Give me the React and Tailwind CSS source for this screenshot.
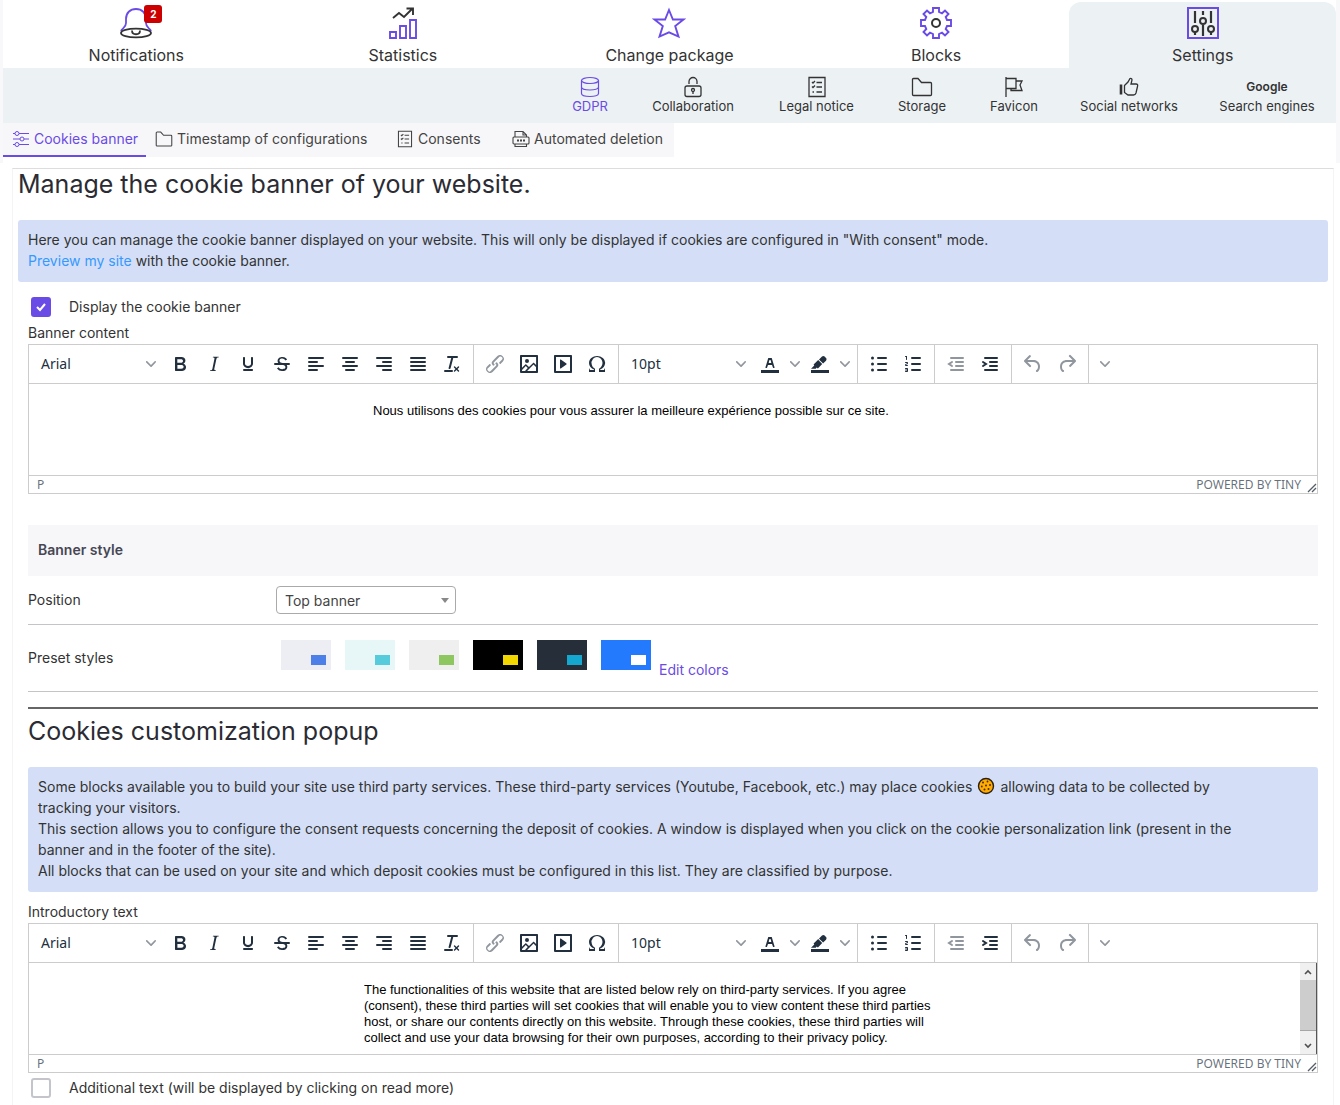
import { clsx } from 'clsx';

const mainTabs = [
  { label: 'Notifications', icon: BellIcon, badge: 2 },
  { label: 'Statistics', icon: StatsIcon },
  { label: 'Change package', icon: StarIcon },
  { label: 'Blocks', icon: GearIcon },
  { label: 'Settings', icon: SlidersIcon, active: true },
];

const subTabs = [
  { label: 'GDPR', icon: DatabaseIcon, active: true, width: 'w-[78px]' },
  { label: 'Collaboration', icon: LockIcon, width: 'w-[128px]' },
  { label: 'Legal notice', icon: ChecklistIcon, width: 'w-[119px]' },
  { label: 'Storage', icon: FolderIcon, width: 'w-[92px]' },
  { label: 'Favicon', icon: FlagIcon, width: 'w-[92px]' },
  { label: 'Social networks', icon: ThumbIcon, width: 'w-[138px]' },
  { label: 'Search engines', width: 'w-[138px]' },
];

const presets = [
  { name: 'Light blue', bg: 'bg-[#ededf4]', chip: 'bg-[#4c80e8]' },
  { name: 'Light cyan', bg: 'bg-[#e7f6f6]', chip: 'bg-[#55cbdc]' },
  { name: 'Light green', bg: 'bg-[#efefef]', chip: 'bg-[#8ec760]' },
  { name: 'Black', bg: 'bg-black', chip: 'bg-[#f1d600]' },
  { name: 'Dark', bg: 'bg-[#252e39]', chip: 'bg-[#14a7d0]' },
  { name: 'Blue', bg: 'bg-[#237afc]', chip: 'bg-white' },
];

function BellIcon() {
  return (
    <svg width="34" height="32" viewBox="0 0 34 32" fill="none" strokeWidth="1.8">
      <path d="M2 24c1-3 5-3 5-8v-4C7 6 11 2 17 2s10 4 10 10v4c0 5 4 5 5 8" stroke="#6a4be5" />
      <ellipse cx="17" cy="26" rx="15" ry="4.4" stroke="#333" />
      <path d="M13 23.500c0 5 8 5 8 0" stroke="#333" />
    </svg>
  );
}

function StatsIcon() {
  return (
    <svg width="32" height="32" viewBox="0 0 32 32" fill="none" strokeWidth="1.9">
      <path d="M6 11l6-5 5 4 8-8M19.500 1.500H26V8" stroke="#333" />
      <path d="M3 25h6v6H3zM13 19h6v12h-6zM23 13h6v18h-6z" stroke="#6a4be5" />
    </svg>
  );
}

function StarIcon() {
  return (
    <svg width="34" height="32" viewBox="0 0 34 32" fill="none" stroke="#6a4be5" strokeWidth="1.9">
      <path d="M17 3l3.900 9.500h10.600l-8.300 6.500 3.300 10.600L17 25.400l-9.500 4.200L10.800 19 2.500 12.500h10.600z" />
    </svg>
  );
}

function GearIcon() {
  return (
    <svg width="34" height="34" viewBox="0 0 34 34" fill="none" strokeWidth="1.900">
      <path
        d="M14 2h6v4l3 1.300 3-2.800 3.500 3.500-2.800 3L28 14h4v6h-4l-1.300 3 2.800 3-3.500 3.500-3-2.800L20 28v4h-6v-4l-3-1.300-3 2.800L4.500 26l2.800-3L6 20H2v-6h4l1.300-3-2.800-3L8 4.500l3 2.800L14 6z"
        stroke="#6a4be5"
      />
      <circle cx="17" cy="17" r="4" stroke="#333" strokeWidth="2" />
    </svg>
  );
}

function SlidersIcon() {
  return (
    <svg width="34" height="34" viewBox="0 0 34 34" fill="none" strokeWidth="2">
      <path d="M2 2h30v30H2z" stroke="#6a4be5" />
      <g stroke="#333">
        <path d="M9 5v12M9 26v3M17 5v4M17 19v11M25 5v12M25 26v3" strokeWidth="2.200" />
        <circle cx="9" cy="23" r="3" />
        <circle cx="17" cy="15" r="3" />
        <circle cx="25" cy="23" r="3" />
      </g>
    </svg>
  );
}

function DatabaseIcon() {
  return (
    <svg width="22" height="22" viewBox="0 0 22 22" fill="none" stroke="currentColor" strokeWidth="1.200">
      <ellipse cx="11" cy="4.500" rx="8.500" ry="3" />
      <path d="M2.500 4.500v13c0 4 17 4 17 0v-13M2.500 11c0 4 17 4 17 0" />
    </svg>
  );
}

function LockIcon() {
  return (
    <svg width="22" height="22" viewBox="0 0 22 22" fill="none" stroke="currentColor" strokeWidth="1.300">
      <rect x="3" y="10" width="16" height="10.500" rx="2" />
      <path d="M7 8V5.500a4 4 0 0 1 8 0V8M11 15v3" />
      <circle cx="11" cy="14" r="1.500" />
    </svg>
  );
}

function ChecklistIcon({ size = 22 }) {
  return (
    <svg width={size} height={size} viewBox="0 0 22 22" fill="none" stroke="currentColor" strokeWidth="1.300">
      <path d="M3 1.500h16v19H3zM10.500 6.500H16M10.500 11H16M10.500 16H16" />
      <path d="M6 6l1 1 2-2M6 10.500l1 1 2-2M6.500 16h1.500" />
    </svg>
  );
}

function FolderIcon({ size = 22 }) {
  return (
    <svg width={size} height={size} viewBox="0 0 22 22" fill="none" stroke="currentColor" strokeWidth="1.300">
      <path d="M1.500 18.500v-15a1 1 0 0 1 1-1h4.500l3.500 4h9a1 1 0 0 1 1 1v11a1 1 0 0 1-1 1h-17a1 1 0 0 1-1-1z" />
    </svg>
  );
}

function FlagIcon() {
  return (
    <svg width="22" height="22" viewBox="0 0 22 22" fill="none" stroke="currentColor" strokeWidth="1.300">
      <path d="M3 1v20M3 2.500h10v10H3M13 5h6l-2 4 2 5.500H8v-2" />
    </svg>
  );
}

function ThumbIcon() {
  return (
    <svg width="22" height="22" viewBox="0 0 22 22" fill="none" stroke="currentColor" strokeWidth="1.300">
      <path d="M3 8.500v10" strokeWidth="2.600" />
      <path d="M6.500 9.500L10 6l2-3.500c1.500-.5 2 .5 2 1.500l-1 4h5c1.500 0 2 1 1.500 2.500L18 17c-.5 1.500-1 2-2.500 2H10l-3.500-2.500z" />
    </svg>
  );
}

function TuneIcon() {
  return (
    <svg width="18" height="18" viewBox="0 0 18 18" fill="none" stroke="currentColor" strokeWidth="1">
      <path d="M1 3.500h2M7 3.500h10M1 9h7M12 9h5M1 14.500h2M7 14.500h10" />
      <circle cx="5" cy="3.500" r="2" />
      <circle cx="10" cy="9" r="2" />
      <circle cx="5" cy="14.500" r="2" />
    </svg>
  );
}

function DocIcon() {
  return (
    <svg width="18" height="18" viewBox="0 0 18 18" fill="none" stroke="currentColor" strokeWidth="1.100">
      <path d="M3 7V1.500h8L14.500 5v2M11 1.500V5h3.500" />
      <rect x="1" y="7" width="16" height="7" rx="1" />
      <path d="M3 14v2.500h11.500V14" />
      <path d="M5 10.500h2M8 10.500h2M11 10.500h2" strokeWidth="2" />
    </svg>
  );
}

function CookieIcon() {
  return (
    <svg className="mx-[5px] inline-block align-[-3px]" width="18" height="18" viewBox="0 0 18 18">
      <circle cx="9" cy="9" r="7.500" fill="#ffab00" stroke="#2b2016" strokeWidth="1.400" />
      <g fill="#4a2d0a">
        <circle cx="6" cy="5.500" r="1" />
        <circle cx="10.500" cy="4.500" r=".9" />
        <circle cx="13" cy="8" r="1" />
        <circle cx="9" cy="8.500" r="1" />
        <circle cx="4.800" cy="9.500" r=".9" />
        <circle cx="7.500" cy="12.500" r="1" />
        <circle cx="11.500" cy="12" r="1" />
      </g>
    </svg>
  );
}

function Chevron() {
  return (
    <svg width="10" height="10" viewBox="0 0 10 10" fill="#222f3e" opacity=".5">
      <path d="M8.700 2.200c.3-.3.8-.3 1 0 .4.400.4.900 0 1.200L5.700 7.800c-.3.300-.9.300-1.200 0L.2 3.400a.8.8 0 0 1 0-1.200c.3-.3.800-.3 1.100 0L5 6l3.700-3.800z" />
    </svg>
  );
}

const lines = (d) => <path d={d} fill="none" stroke="#222f3e" strokeWidth="2" strokeLinecap="round" />;

// toolbar icons, all on a 24px grid
const icons = {
  bold: (
    <path d="M7.800 19c-.3 0-.5 0-.6-.2l-.2-.5V5.700c0-.2 0-.4.2-.5l.6-.2h5c1.500 0 2.700.3 3.500 1 .7.600 1.100 1.400 1.100 2.500a3 3 0 0 1-.6 1.900c-.4.600-1 1-1.600 1.200.4.100.9.300 1.300.6s.8.700 1 1.200c.4.400.5 1 .5 1.600 0 1.300-.4 2.300-1.300 3-.8.700-2.100 1-3.800 1H7.800zm5-8.300c.6 0 1.200-.1 1.600-.5.4-.3.600-.7.600-1.300 0-1.100-.8-1.700-2.300-1.700H9.300v3.500h3.400zm.5 6c.7 0 1.300-.1 1.700-.4.4-.4.600-.9.600-1.500s-.2-1-.7-1.400c-.4-.3-1-.4-2-.4H9.400v3.800h4z" />
  ),
  italic: (
    <path d="M16.700 4.700l-.1.900h-.3c-.6 0-1 0-1.400.3-.3.300-.4.600-.5 1.100l-2.100 9.800v.6c0 .5.400.8 1.400.8h.2l-.2.800H8l.2-.8h.2c1.100 0 1.800-.5 2-1.500l2-9.800.1-.5c0-.6-.4-.8-1.400-.8h-.3l.2-.9h5.800z" />
  ),
  underline: (
    <path d="M16 5c.6 0 1 .4 1 1v5.500a4 4 0 0 1-.4 1.800l-1 1.400a5.300 5.300 0 0 1-5.500 1 5 5 0 0 1-1.600-1c-.5-.4-.8-.9-1.100-1.400a4 4 0 0 1-.4-1.800V6c0-.6.4-1 1-1s1 .4 1 1v5.500c0 .3 0 .6.2 1l.6.7a3.300 3.300 0 0 0 2.200.8 3.400 3.400 0 0 0 2.200-.8c.3-.2.400-.5.600-.8l.2-.9V6c0-.6.4-1 1-1zM8 17h8c.6 0 1 .4 1 1s-.4 1-1 1H8a1 1 0 0 1 0-2z" />
  ),
  strikethrough: (
    <path d="M15.600 8.500c-.5-.7-1-1.100-1.300-1.300-.6-.4-1.300-.6-2-.6-2.700 0-2.800 1.700-2.800 2.100 0 1.600 1.800 2 3.200 2.300 4.400.9 4.600 2.800 4.600 3.900 0 1.400-.7 4.100-5 4.100A6.200 6.200 0 0 1 7 16.400l1.500-1.100c.4.600 1.600 2 3.700 2 1.600 0 2.500-.4 3-1.200.4-.8.300-2-.8-2.600-.7-.4-1.600-.7-2.900-1-1-.2-3.900-.8-3.900-3.600C7.600 6 10.300 5 12.400 5c2.900 0 4.200 1.600 4.700 2.400l-1.500 1.100zM5 11h14a1 1 0 0 1 0 2H5a1 1 0 0 1 0-2z" />
  ),
  'align left': lines('M5 6h14M5 10h8M5 14h14M5 18h8'),
  'align center': lines('M5 6h14M8 10h8M5 14h14M8 18h8'),
  'align right': lines('M5 6h14M11 10h8M5 14h14M11 18h8'),
  justify: lines('M5 6h14M5 10h14M5 14h14M5 18h14'),
  'clear formatting': (
    <path d="M13.200 6a1 1 0 0 1 0 .2l-2.600 10a1 1 0 0 1-1 .8h-.2a.8.8 0 0 1-.8-1l2.600-10H8a1 1 0 1 1 0-2h9a1 1 0 0 1 0 2h-3.800zM5 18h7a1 1 0 0 1 0 2H5a1 1 0 0 1 0-2zm13 1.500L16.500 18 15 19.500a.7.7 0 0 1-1-1l1.500-1.500-1.500-1.500a.7.7 0 0 1 1-1l1.500 1.500 1.500-1.500a.7.7 0 0 1 1 1L17.500 17l1.500 1.500a.7.7 0 0 1-1 1z" />
  ),
  link: (
    <path d="M6.200 12.300a1 1 0 0 1 1.400 1.400l-2.100 2a2 2 0 1 0 2.700 2.800l4.800-4.800a1 1 0 0 0 0-1.400 1 1 0 1 1 1.400-1.300 2.900 2.900 0 0 1 0 4L9.600 20a3.900 3.900 0 0 1-5.500-5.500l2-2zm11.600-.6a1 1 0 0 1-1.400-1.400l2-2a2 2 0 1 0-2.600-2.800L11 10.300a1 1 0 0 0 0 1.400A1 1 0 1 1 9.600 13a2.900 2.900 0 0 1 0-4L14.400 4a3.900 3.900 0 0 1 5.500 5.500l-2 2z" />
  ),
  image: (
    <path
      fillRule="evenodd"
      d="M5 15.700l3.300-3.200c.3-.3.700-.3 1 0L12 15l4.100-4c.3-.4.800-.4 1 0l2 1.900V5H5v10.700zM5 18V19h3l2.800-2.900-2-2L5 17.900zm14-3l-2.500-2.400-6.400 6.500H19v-4zM4 3h16c.6 0 1 .4 1 1v16c0 .6-.4 1-1 1H4a1 1 0 0 1-1-1V4c0-.6.4-1 1-1zm6 8a2 2 0 1 0 0-4 2 2 0 0 0 0 4z"
    />
  ),
  media: (
    <path
      fillRule="evenodd"
      d="M4 3h16c.6 0 1 .4 1 1v16c0 .6-.4 1-1 1H4a1 1 0 0 1-1-1V4c0-.6.4-1 1-1zm1 2v14h14V5H5zm4.800 2.600l5.600 4a.5.5 0 0 1 0 .8l-5.600 4A.5.5 0 0 1 9 16V8a.5.5 0 0 1 .8-.4z"
    />
  ),
  'special character': (
    <path d="M15 18h4l1-2v4h-6v-3.300l1.400-1a6 6 0 0 0 1.800-2.900 6.300 6.300 0 0 0-.1-4.100 5.800 5.800 0 0 0-3-3.200c-.6-.3-1.300-.5-2.100-.5a5.100 5.100 0 0 0-3.900 1.800 6.300 6.300 0 0 0-1.300 6 6.200 6.200 0 0 0 1.800 3l1.400.9V20H4v-4l1 2h4v-.5l-2-1L5.400 15A6.500 6.500 0 0 1 4 11c0-1 .2-1.900.6-2.700A7 7 0 0 1 6.300 6C7.100 5.400 8 5 9 4.500c1-.3 2-.5 3.100-.5a8.800 8.800 0 0 1 5.700 2 7 7 0 0 1 1.700 2.300 6 6 0 0 1 .2 4.800c-.2.700-.6 1.300-1 1.900a7.600 7.600 0 0 1-3.600 2.500v.5z" />
  ),
  'text color': (
    <path
      fillRule="evenodd"
      d="M3 18h18v3H3zM8.700 16h-.8a.5.5 0 0 1-.5-.6l2.700-9c.1-.3.300-.4.500-.4h2.800c.2 0 .4.100.5.400l2.700 9a.5.5 0 0 1-.5.600h-.8a.5.5 0 0 1-.4-.4l-.7-2.200c0-.3-.3-.4-.5-.4h-3.400c-.2 0-.4.100-.5.400l-.7 2.200c0 .3-.2.400-.4.400zm2.600-7.600l-.6 2a.5.5 0 0 0 .5.600h1.600a.5.5 0 0 0 .5-.6l-.6-2c0-.3-.3-.4-.5-.4h-.4c-.2 0-.4.100-.5.400z"
    />
  ),
  'background color': (
    <path d="M3 18h18v3H3zM7.700 16.700H3l3.300-3.300-.7-.8L10.200 8l4 4.100-4 4.200c-.2.200-.6.200-.8 0l-.6-.7-1.100 1.100zm5-7.500L11 7.400l3-2.900a2 2 0 0 1 2.600 0L18 6c.7.700.7 2 0 2.700l-2.900 2.900-1.800-1.800-.5-.6z" />
  ),
  'bullet list': (
    <>
      {lines('M11 6h8M11 12h8M11 18h8')}
      <circle cx="5.500" cy="6" r="1.500" />
      <circle cx="5.500" cy="12" r="1.500" />
      <circle cx="5.500" cy="18" r="1.500" />
    </>
  ),
  'numbered list': (
    <>
      {lines('M11 6h8M11 12h8M11 18h8')}
      <path d="M6 4v3.500c0 .3-.2.500-.5.500a.5.5 0 0 1-.5-.5V5h-.5a.5.5 0 0 1 0-1H6zm-1 8.800l.2.200h1.300c.3 0 .5.200.5.500s-.2.500-.5.500H4.900a1 1 0 0 1-.9-1V13c0-.4.3-.8.6-1l1.200-.4.2-.3a.2.2 0 0 0-.2-.2H4.500a.5.5 0 0 1-.5-.5c0-.3.2-.5.5-.5h1.600c.5 0 .9.400.9 1v.1c0 .4-.3.800-.6 1l-1.200.4-.2.300zM7 17v2c0 .6-.4 1-1 1H4.500a.5.5 0 0 1 0-1h1.200c.2 0 .3-.1.3-.3 0-.2-.1-.3-.3-.3H4.400a.4.4 0 1 1 0-.8h1.300c.2 0 .3-.1.3-.3 0-.2-.1-.3-.3-.3H4.500a.5.5 0 1 1 0-1H6c.6 0 1 .4 1 1z" />
    </>
  ),
  outdent: lines('M7 6h12M12 10h7M12 14h7M7 18h12M8 10l-3 2 3 2'),
  indent: lines('M7 6h12M12 10h7M12 14h7M7 18h12M5 10l3 2-3 2'),
  undo: (
    <path d="M6.400 8H12c3.700 0 6.200 2 6.800 5.100.6 2.700-.4 5.600-2.300 6.800a1 1 0 0 1-1-1.800c1.100-.6 1.800-2.700 1.400-4.600-.5-2.100-2.100-3.500-4.900-3.500H6.400l3.300 3.300a1 1 0 1 1-1.400 1.400l-5-5a1 1 0 0 1 0-1.400l5-5a1 1 0 0 1 1.400 1.400L6.400 8z" />
  ),
  redo: (
    <path d="M17.600 10H12c-2.800 0-4.400 1.400-4.900 3.500-.4 2 .3 4 1.400 4.600a1 1 0 1 1-1 1.800c-2-1.200-2.900-4.100-2.300-6.800.6-3 3-5.100 6.800-5.100h5.600l-3.300-3.300a1 1 0 1 1 1.400-1.400l5 5a1 1 0 0 1 0 1.400l-5 5a1 1 0 0 1-1.400-1.400l3.300-3.300z" />
  ),
};

const ToolButton = ({ name, disabled }) => (
  <button type="button" aria-label={name} disabled={disabled} className="flex h-[34px] w-[34px] items-center justify-center disabled:opacity-50">
    <svg width="24" height="24" viewBox="0 0 24 24" fill="#222f3e">
      {icons[name]}
    </svg>
  </button>
);

const SplitButton = ({ name }) => (
  <div className="flex">
    <ToolButton name={name} />
    <button type="button" aria-label={`${name} menu`} className="flex w-4 items-center justify-center">
      <Chevron />
    </button>
  </div>
);

const ListBox = ({ label, value }) => (
  <button type="button" aria-label={label} className="flex h-[34px] w-[130px] items-center justify-between pr-[7px] pl-2 text-sm text-[#222f3e]">
    <span>{value}</span>
    <Chevron />
  </button>
);

const Group = ({ children }) => <div className="flex h-[38px] items-center border-r border-[#ccc] px-1">{children}</div>;

const ScrollBar = () => (
  <div className="flex w-[17px] flex-col border-r border-[#555] bg-[#f0f0f0]">
    <button type="button" aria-label="Scroll up" className="flex h-[17px] items-center justify-center">
      <svg width="8" height="6" viewBox="0 0 8 6" fill="none" stroke="#505050" strokeWidth="1.600">
        <path d="M1 5l3-3 3 3" />
      </svg>
    </button>
    <div className="h-[51px] border-b border-[#a6a6a6] bg-[#cdcdcd]" />
    <button type="button" aria-label="Scroll down" className="mt-auto flex h-[17px] items-center justify-center">
      <svg width="8" height="6" viewBox="0 0 8 6" fill="none" stroke="#505050" strokeWidth="1.600">
        <path d="M1 1l3 3 3-3" />
      </svg>
    </button>
  </div>
);

const Editor = ({ id, text, indent, scroll }) => (
  <div className="border border-[#ccc] bg-white [font-family:'Noto_Sans','Open_Sans',sans-serif]">
    <div className="flex flex-wrap border-b border-[#ccc]">
      <Group>
        <ListBox label="Font family" value="Arial" />
        <ToolButton name="bold" />
        <ToolButton name="italic" />
        <ToolButton name="underline" />
        <ToolButton name="strikethrough" />
        <ToolButton name="align left" />
        <ToolButton name="align center" />
        <ToolButton name="align right" />
        <ToolButton name="justify" />
        <ToolButton name="clear formatting" />
      </Group>
      <Group>
        <ToolButton name="link" disabled />
        <ToolButton name="image" />
        <ToolButton name="media" />
        <ToolButton name="special character" />
      </Group>
      <Group>
        <ListBox label="Font size" value="10pt" />
        <SplitButton name="text color" />
        <SplitButton name="background color" />
      </Group>
      <Group>
        <ToolButton name="bullet list" />
        <ToolButton name="numbered list" />
      </Group>
      <Group>
        <ToolButton name="outdent" disabled />
        <ToolButton name="indent" />
      </Group>
      <Group>
        <ToolButton name="undo" disabled />
        <ToolButton name="redo" disabled />
      </Group>
      <button type="button" aria-label="More" className="ml-1 flex w-6 items-center justify-center">
        <Chevron />
      </button>
    </div>
    <div className="flex h-[91px] justify-between">
      <textarea
        id={id}
        defaultValue={text}
        className={clsx(
          "w-[582px] resize-none overflow-hidden pt-[19px] [font-family:'Liberation_Sans',Arial,sans-serif] text-[13px] leading-4 text-black outline-none",
          indent
        )}
      />
      {scroll && <ScrollBar />}
    </div>
    <div className="flex h-[18px] items-center border-t border-[#ccc] pt-px pl-2 text-xs text-[#222f3e]/70">
      <span>P</span>
      <a href="#tiny" className="ml-auto">POWERED BY TINY</a>
      <svg className="ml-1 self-end" width="12" height="12" viewBox="0 0 12 12" fill="none" stroke="#555d66" strokeWidth="1.300">
        <path d="M3 11l8-8M7 11l4-4" />
      </svg>
    </div>
  </div>
);

const CheckRow = ({ id, label, checked }) => (
  <div className="flex h-5 items-center gap-[18px] pl-[3px]">
    <span className="grid">
      <input
        id={id}
        type="checkbox"
        defaultChecked={checked}
        className="peer col-start-1 row-start-1 h-5 w-5 appearance-none rounded-[3px] border-2 border-[#c4c4cc] bg-white checked:border-[#6a4be5] checked:bg-[#6a4be5]"
      />
      <svg className="pointer-events-none col-start-1 row-start-1 hidden h-5 w-5 peer-checked:block" viewBox="0 0 20 20" fill="none" stroke="#fff" strokeWidth="2">
        <path d="M6 10l3 3 5-6" />
      </svg>
    </span>
    <label htmlFor={id} className="pb-[2px]">{label}</label>
  </div>
);

const tabClass = 'flex items-center gap-1 border-b-2 text-[14px] leading-8';

const App = () => {
  return (
    <div className="flex min-h-screen flex-col bg-white font-['Inter','Open_Sans',sans-serif] text-[14px] leading-[21px] font-normal text-[#333]">
      <div className="border-r-4 border-l-[3px] border-[#f8f8fa] pb-[6px]">
        <nav className="grid grid-cols-5 text-[16px]">
          {mainTabs.map(({ label, icon: Icon, badge, active }) => (
            <a
              key={label}
              href="#main"
              className={clsx('mt-[2px] flex h-[66px] flex-col items-center rounded-t-xl', active && 'bg-[#ecf1f4]')}
            >
              <span className="relative mt-1 flex h-[34px] items-center">
                <Icon />
                {badge && (
                  <span className="absolute -top-px left-[25px] h-[18px] w-[18px] rounded-[3px] bg-[#c00] text-center text-[10px] leading-[18px] font-bold text-white">
                    {badge}
                  </span>
                )}
              </span>
              <span className="mt-[5px]">{label}</span>
            </a>
          ))}
        </nav>
        <nav className="flex h-[55px] justify-end bg-[#ecf1f4] text-[13px] leading-4">
          {subTabs.map(({ label, icon: Icon, active, width }) => (
            <a key={label} href="#sub" className={clsx('flex flex-col items-center whitespace-nowrap', width, active && 'text-[#6a4be5]')}>
              <span className="mt-2 flex h-[22px] items-center">
                {Icon ? <Icon /> : <span className="text-[12px] font-semibold">Google</span>}
              </span>
              <span>{label}</span>
            </a>
          ))}
        </nav>
        <nav className="flex w-[671px] bg-[#f7f7f9] whitespace-nowrap text-[#444]">
          <a href="#cookies" className={clsx(tabClass, 'w-[143px] border-[#6a4be5] pl-[9px] text-[#6a4be5]')}>
            <TuneIcon />
            Cookies banner
          </a>
          <a href="#timestamp" className={clsx(tabClass, 'w-[241px] border-transparent pl-[9px]')}>
            <FolderIcon size={18} />
            Timestamp of configurations
          </a>
          <a href="#consents" className={clsx(tabClass, 'w-[116px] border-transparent pl-[9px]')}>
            <ChecklistIcon size={18} />
            Consents
          </a>
          <a href="#deletion" className={clsx(tabClass, 'border-transparent pl-[9px]')}>
            <DocIcon />
            Automated deletion
          </a>
        </nav>
      </div>

      <main className="mx-[6px] mt-[5px] ml-3 flex-1 border border-b-0 border-[#f4f4f6] border-t-[#ddd] px-[5px]">
        <h1 className="text-[25px] leading-[30px] text-[#2b2b33]">Manage the cookie banner of your website.</h1>
        <p className="mt-[21px] rounded-[3px] bg-[#d4dff7] px-[10px] pt-[9px] pb-[11px]">
          Here you can manage the cookie banner displayed on your website. This will only be displayed if cookies are configured in "With consent" mode.
          <br />
          <a href="#preview" className="text-[#3699ff]">Preview my site</a> with the cookie banner.
        </p>

        <div className="px-[10px]">
          <div className="mt-[15px]">
            <CheckRow id="display" label="Display the cookie banner" checked />
          </div>
          <label htmlFor="banner-content" className="mt-[5px] mb-px block">Banner content</label>
          <Editor
            id="banner-content"
            indent="ml-[344px]"
            text="Nous utilisons des cookies pour vous assurer la meilleure expérience possible sur ce site."
          />

          <h2 className="mt-[31px] bg-[#f7f7f9] px-[10px] pt-[14px] pb-4 font-semibold text-[#464654]">Banner style</h2>
          <div className="flex items-center border-b border-[#c4c4c8] py-[10px]">
            <label htmlFor="position" className="w-[248px] pb-[2px]">Position</label>
            <div className="relative">
              <select id="position" className="h-7 w-[180px] appearance-none rounded border border-[#aaa] bg-white pl-2 text-[#444]">
                <option>Top banner</option>
                <option>Bottom banner</option>
              </select>
              <svg className="pointer-events-none absolute top-3 right-[7px]" width="8" height="5" viewBox="0 0 8 5" fill="#888">
                <path d="M0 0h8L4 5z" />
              </svg>
            </div>
          </div>
          <div className="flex h-[67px] items-center border-b border-[#c4c4c8] pb-[2px]">
            <span className="w-[253px]">Preset styles</span>
            <div className="flex items-end">
              <div className="mb-[5px] flex gap-[14px]">
                {presets.map((preset) => (
                  <button
                    key={preset.name}
                    type="button"
                    aria-label={preset.name}
                    className={clsx('flex h-[30px] w-[50px] items-end justify-end p-[5px]', preset.bg)}
                  >
                    <span className={clsx('h-[10px] w-[15px]', preset.chip)} />
                  </button>
                ))}
              </div>
              <a href="#colors" className="-mb-[5px] ml-2 text-[#6a4be5]">Edit colors</a>
            </div>
          </div>
          <hr className="mt-[15px] border-t-2 border-[#666]" />

          <h1 className="mt-[7px] text-[25px] leading-[30px] text-[#2b2b33]">Cookies customization popup</h1>
          <p className="mt-[21px] rounded-[3px] bg-[#d4dff7] px-[10px] pt-[9px] pb-[11px]">
            Some blocks available you to build your site use third party services. These third-party services (Youtube, Facebook, etc.) may place cookies
            <CookieIcon />
            allowing data to be collected by
            <br />
            tracking your visitors.
            <br />
            This section allows you to configure the consent requests concerning the deposit of cookies. A window is displayed when you click on the cookie
            personalization link (present in the
            <br />
            banner and in the footer of the site).
            <br />
            All blocks that can be used on your site and which deposit cookies must be configured in this list. They are classified by purpose.
          </p>

          <label htmlFor="intro" className="mt-[9px] mb-px block">Introductory text</label>
          <Editor
            id="intro"
            indent="ml-[335px]"
            scroll
            text="The functionalities of this website that are listed below rely on third-party services. If you agree (consent), these third parties will set cookies that will enable you to view content these third parties host, or share our contents directly on this website. Through these cookies, these third parties will collect and use your data browsing for their own purposes, according to their privacy policy."
          />
          <div className="mt-[5px]">
            <CheckRow id="additional" label="Additional text (will be displayed by clicking on read more)" />
          </div>
        </div>
      </main>
    </div>
  );
};

export default App;
